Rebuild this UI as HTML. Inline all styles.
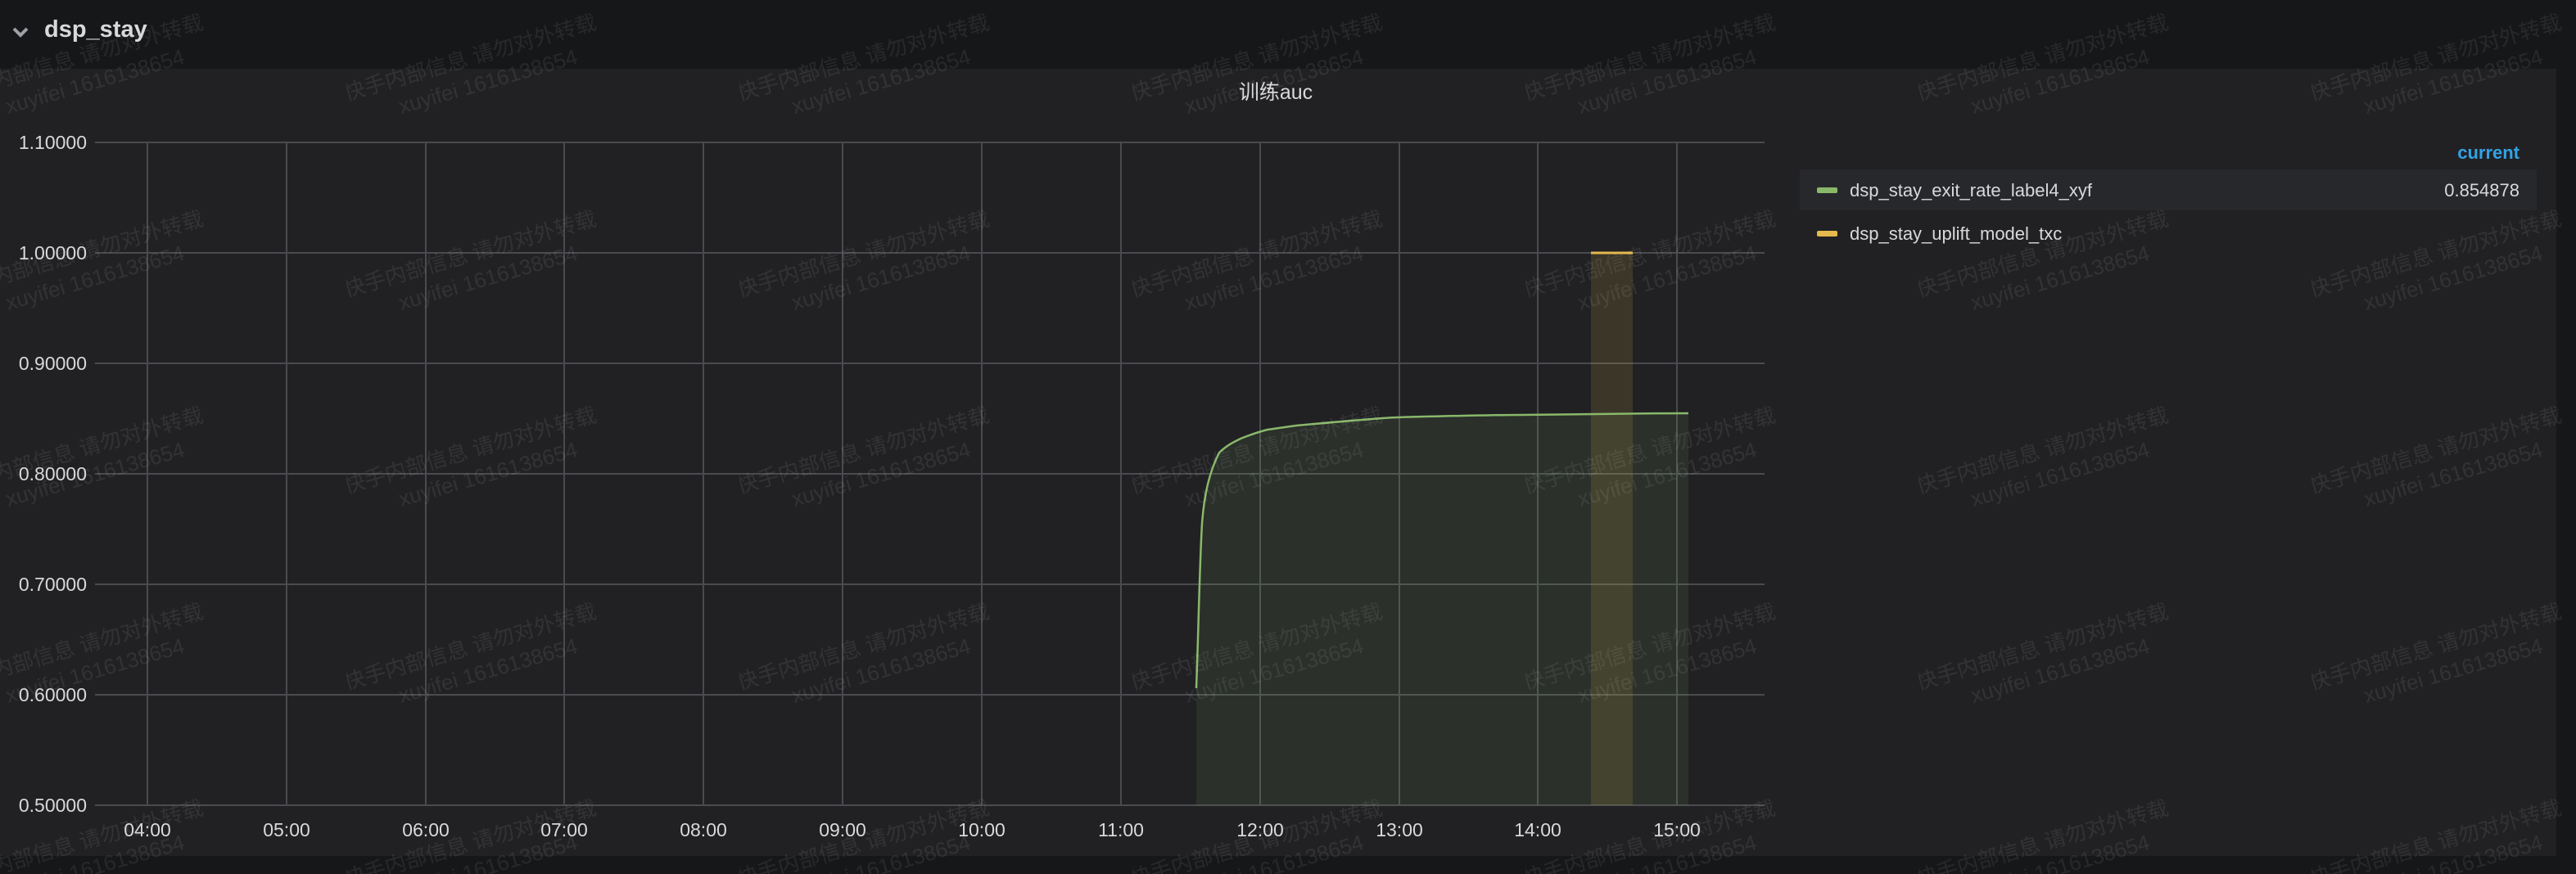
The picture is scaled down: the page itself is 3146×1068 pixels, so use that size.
<!DOCTYPE html>
<html><head><meta charset="utf-8"><style>
html,body{margin:0;padding:0;background:#161719;width:3146px;height:1068px;overflow:hidden}
svg{display:block}
text{font-family:"Liberation Sans","Noto Sans CJK SC",sans-serif}
</style></head><body>
<svg width="3146" height="1068" viewBox="0 0 3146 1068" xmlns="http://www.w3.org/2000/svg">
<defs>
<pattern id="wm" patternUnits="userSpaceOnUse" width="480" height="240" x="423" y="-17">
  <g fill="#ffffff" fill-opacity="0.075" font-size="26" font-family="Liberation Sans, Noto Sans CJK SC, sans-serif">
    <g transform="translate(0,140) rotate(-16)"><text x="0" y="0">快手内部信息 请勿对外转载</text><text x="60" y="34">xuyifei 1616138654</text></g>
  </g>
</pattern>
</defs>
<rect width="3146" height="1068" fill="#161719"/>
<!-- header -->
<path d="M17 35 L25 43 L33 35" stroke="#9fa1a6" stroke-width="4" fill="none"/>
<text x="54" y="45" font-size="29" font-weight="bold" fill="#d8d9da">dsp_stay</text>
<!-- panel -->
<rect x="0" y="84" width="3122" height="962" fill="#212124"/>
<text x="1558" y="121" font-size="25" fill="#d8d9da" text-anchor="middle">训练auc</text>
<!-- grid -->
<g stroke="#4a4b4e" stroke-width="2">
  <line x1="116" y1="174" x2="2155" y2="174"/>
  <line x1="116" y1="309" x2="2155" y2="309"/>
  <line x1="116" y1="444" x2="2155" y2="444"/>
  <line x1="116" y1="579" x2="2155" y2="579"/>
  <line x1="116" y1="714" x2="2155" y2="714"/>
  <line x1="116" y1="849" x2="2155" y2="849"/>
  <line x1="116" y1="984" x2="2155" y2="984"/>
  <line x1="180" y1="174" x2="180" y2="984"/>
  <line x1="350" y1="174" x2="350" y2="984"/>
  <line x1="520" y1="174" x2="520" y2="984"/>
  <line x1="689" y1="174" x2="689" y2="984"/>
  <line x1="859" y1="174" x2="859" y2="984"/>
  <line x1="1029" y1="174" x2="1029" y2="984"/>
  <line x1="1199" y1="174" x2="1199" y2="984"/>
  <line x1="1369" y1="174" x2="1369" y2="984"/>
  <line x1="1539" y1="174" x2="1539" y2="984"/>
  <line x1="1709" y1="174" x2="1709" y2="984"/>
  <line x1="1878" y1="174" x2="1878" y2="984"/>
  <line x1="2048" y1="174" x2="2048" y2="984"/>
</g>
<!-- fills -->
<path d="M1461 841 C1464 760 1465 690 1468 640 C1471 600 1478 575 1489 553 C1500 543 1507 540 1515 536 C1530 530 1540 527 1548 525 C1570 522 1580 520 1594 519 C1650 514 1700 510 1706 510 C1780 508 1830 507 1859 507 C1950 506 2000 505 2062 505 L2062 984 L1461 984 Z" fill="#8ab86a" fill-opacity="0.1"/>
<rect x="1943" y="309" width="51" height="675" fill="#e5b94b" fill-opacity="0.14"/>
<line x1="1943" y1="309" x2="1994" y2="309" stroke="#e5b94b" stroke-width="3"/>
<path d="M1461 841 C1464 760 1465 690 1468 640 C1471 600 1478 575 1489 553 C1500 543 1507 540 1515 536 C1530 530 1540 527 1548 525 C1570 522 1580 520 1594 519 C1650 514 1700 510 1706 510 C1780 508 1830 507 1859 507 C1950 506 2000 505 2062 505" fill="none" stroke="#8ab86a" stroke-width="2.5"/>
<!-- y labels -->
<g font-size="23" fill="#d8d9da" text-anchor="end">
  <text x="106" y="182">1.10000</text>
  <text x="106" y="317">1.00000</text>
  <text x="106" y="452">0.90000</text>
  <text x="106" y="587">0.80000</text>
  <text x="106" y="722">0.70000</text>
  <text x="106" y="857">0.60000</text>
  <text x="106" y="992">0.50000</text>
</g>
<g font-size="23" fill="#d8d9da" text-anchor="middle">
  <text x="180" y="1022">04:00</text>
  <text x="350" y="1022">05:00</text>
  <text x="520" y="1022">06:00</text>
  <text x="689" y="1022">07:00</text>
  <text x="859" y="1022">08:00</text>
  <text x="1029" y="1022">09:00</text>
  <text x="1199" y="1022">10:00</text>
  <text x="1369" y="1022">11:00</text>
  <text x="1539" y="1022">12:00</text>
  <text x="1709" y="1022">13:00</text>
  <text x="1878" y="1022">14:00</text>
  <text x="2048" y="1022">15:00</text>
</g>
<!-- legend -->
<text x="3077" y="194" font-size="22" font-weight="bold" fill="#33a2e5" text-anchor="end">current</text>
<rect x="2198" y="207" width="900" height="50" fill="#27282b"/>
<rect x="2219" y="229" width="25" height="7" rx="2" fill="#8ab86a"/>
<text x="2259" y="240" font-size="22" fill="#d8d9da">dsp_stay_exit_rate_label4_xyf</text>
<text x="3077" y="240" font-size="22" fill="#d8d9da" text-anchor="end">0.854878</text>
<rect x="2219" y="282" width="25" height="7" rx="2" fill="#e5b94b"/>
<text x="2259" y="293" font-size="22" fill="#d8d9da">dsp_stay_uplift_model_txc</text>
<!-- watermark -->
<rect width="3146" height="1068" fill="url(#wm)"/>
</svg>
</body></html>
